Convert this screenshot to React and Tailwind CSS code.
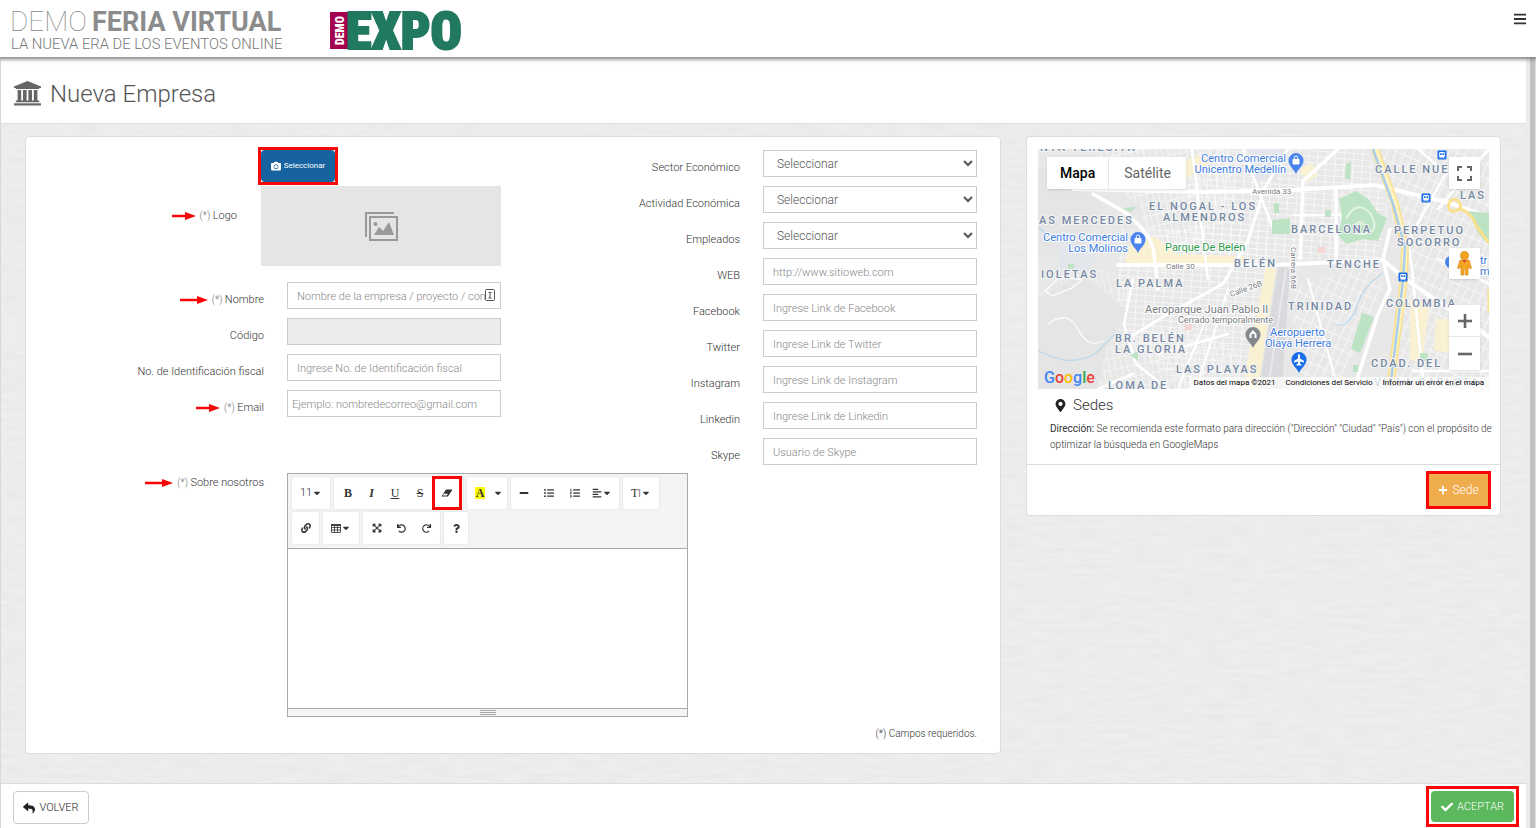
import React from "react";
import {
  FaCamera, FaBars, FaReply, FaCheck, FaPlus, FaMapMarkerAlt, FaListUl, FaListOl,
  FaAlignLeft, FaLink, FaUndo, FaRedo, FaQuestion, FaMinus, FaCaretDown, FaExpandArrowsAlt,
} from "react-icons/fa";

function Arrow({ wide }) {
  return (
    <svg width={wide ? 28 : 24} height="10" viewBox={wide ? "-4 0 28 10" : "0 0 24 10"} className="shrink-0" aria-hidden="true">
      <path d={wide ? "M-4 3.800H13V1L24 5L13 9V6.200H-4Z" : "M0 3.800H13V1L24 5L13 9V6.200H0Z"} fill="#f90606" />
    </svg>
  );
}

function Label({ id, children, required, arrow, wide }) {
  return (
    <label htmlFor={id} className="flex items-center justify-end gap-1 whitespace-nowrap pt-2 leading-5">
      {arrow && <Arrow wide={wide} />}
      <span>{required && <span className="text-[10px] text-[#777]">(*) </span>}{children}</span>
    </label>
  );
}

const field = "h-[27px] w-full min-w-0 border border-[#ccc] bg-white font-light text-[#555] outline-none placeholder:text-[#888]";

function Row({ children }) {
  return <div className="mb-[9px] grid h-[27px] grid-cols-[226fr_214fr] gap-x-[23px] pr-[13px]">{children}</div>;
}

function SelectRow({ id, label }) {
  return (
    <Row>
      <Label id={id}>{label}</Label>
      <select id={id} className={field + " pl-[9px] text-[12px]"}><option>Seleccionar</option></select>
    </Row>
  );
}

function TextRow({ id, label, placeholder }) {
  return (
    <Row>
      <Label id={id}>{label}</Label>
      <input id={id} placeholder={placeholder} className={field + " px-[9px] pt-[2px]"} />
    </Row>
  );
}

function Group({ children }) {
  return <div className="flex h-8 items-center rounded-xs bg-white px-[2px] shadow-[0_0_1px_1px_#eaeaea]">{children}</div>;
}

function Tool({ label, children, className = "w-6" }) {
  return (
    <button type="button" aria-label={label} className={"flex h-8 items-center justify-center text-[10px] text-[#333] " + className}>
      {children}
    </button>
  );
}

function EraserIcon() {
  return (
    <svg width="12" height="8" viewBox="0 0 12 8" aria-hidden="true">
      <path d="M5 .5H11.500L7 7.500H.5Z" fill="#333" /><path d="M2.900 4.700H6.900L5.800 6.500H1.800Z" fill="#fff" />
    </svg>
  );
}

function TableIcon() {
  return (
    <svg width="10" height="9" viewBox="0 0 10 9" fill="none" stroke="#444" aria-hidden="true">
      <path d="M0 1H10" strokeWidth="2" /><path d="M.5.5H9.500V8.500H.5ZM.5 3.500H9.500M.5 6H9.500M3.500 1V8.500M6.500 1V8.500" strokeWidth=".9" />
    </svg>
  );
}

function BankIcon() {
  return (
    <svg width="27" height="25" viewBox="0 0 27 25" fill="#666" aria-hidden="true">
      <path d="M13.500 0L27 5.500V7H25.200V8H1.800V7H0V5.500Z" />
      <path d="M3.600 9H7.200V19.500H9V9H12.600V19.500H14.400V9H18V19.500H19.800V9H23.400V19.500H25.200V21.300H1.800V19.500H3.600Z" />
      <path d="M0 22.300H27V24.500H0Z" />
    </svg>
  );
}

function Editor() {
  return (
    <div className="flex h-[244px] flex-col border border-[#a9a9a9] bg-white">
      <div className="flex flex-wrap content-start gap-x-1 gap-y-[3px] border-b border-[#a9a9a9] bg-[#f4f4f4] pt-[3px] pr-[5px] pb-[4px] pl-[4px]">
        <Group><Tool label="Tamaño" className="w-[34px] text-[11px]!">11<FaCaretDown size={10} /></Tool></Group>
        <Group>
          <Tool label="Negrita"><span className="font-['Liberation_Serif',serif] text-[12px] font-bold">B</span></Tool>
          <Tool label="Cursiva" className="w-[23px]"><span className="font-['Liberation_Serif',serif] text-[12px] font-bold italic">I</span></Tool>
          <Tool label="Subrayado"><span className="font-['Liberation_Serif',serif] text-[12px] underline">U</span></Tool>
          <Tool label="Tachado" className="w-[26px]"><span className="font-['Liberation_Serif',serif] text-[12px] line-through">S</span></Tool>
          <Tool label="Borrar formato" className="relative z-10 w-[28px] outline-[3px] -outline-offset-2 outline-[#f90606]"><EraserIcon /></Tool>
        </Group>
        <Group>
          <Tool label="Color" className="w-[22px]"><span className="bg-[#ff0] px-px font-['Liberation_Serif',serif] text-[12px] leading-3 font-bold">A</span></Tool>
          <Tool label="Más colores" className="w-[14px]"><FaCaretDown /></Tool>
        </Group>
        <Group>
          <Tool label="Línea" className="w-[22px]"><FaMinus /></Tool>
          <Tool label="Lista" className="w-[28px]"><FaListUl /></Tool>
          <Tool label="Lista numerada"><FaListOl /></Tool>
          <Tool label="Párrafo" className="w-[30px]"><FaAlignLeft /><FaCaretDown /></Tool>
        </Group>
        <Group><Tool label="Alto de línea" className="w-[32px]"><span className="font-['Liberation_Serif',serif] text-[12px]">T</span>I<FaCaretDown /></Tool></Group>
        <Group><Tool label="Enlace" className="w-[23px]"><FaLink /></Tool></Group>
        <Group><Tool label="Tabla" className="w-[32px]"><TableIcon /><FaCaretDown /></Tool></Group>
        <Group>
          <Tool label="Pantalla completa"><FaExpandArrowsAlt /></Tool>
          <Tool label="Deshacer" className="w-[25px]"><FaUndo size={9} /></Tool>
          <Tool label="Rehacer"><FaRedo size={9} /></Tool>
        </Group>
        <Group><Tool label="Ayuda" className="w-[20px]"><FaQuestion size={9} /></Tool></Group>
      </div>
      <textarea id="sobre" className="min-h-0 w-full flex-1 resize-none bg-white p-2 outline-none" />
      <div className="flex h-[8px] flex-col items-center justify-center gap-px border-t border-[#a9a9a9] bg-[#f5f5f5]">
        <i className="h-px w-4 bg-[#a9a9a9]" /><i className="h-px w-4 bg-[#a9a9a9]" /><i className="h-px w-4 bg-[#a9a9a9]" />
      </div>
    </div>
  );
}

const AREAS = [
  [2, 2, "NTA TERESITA"], [111, 61, "EL NOGAL - LOS"], [125, 72, "ALMENDROS"], [1, 75, "AS MERCEDES"], [196, 118, "BELÉN"],
  [3, 129, "IOLETAS"], [78, 138, "LA PALMA"], [77, 193, "BR. BELÉN"], [77, 204, "LA GLORIA"], [138, 224, "LAS PLAYAS"],
  [70, 240, "LOMA DE"], [337, 24, "CALLE NUEVA"], [422, 50, "LAS"], [253, 84, "BARCELONA"], [356, 85, "PERPETUO"],
  [359, 97, "SOCORRO"], [289, 119, "TENCHE"], [250, 161, "TRINIDAD"], [348, 158, "COLOMBIA"], [333, 218, "CDAD. DEL"],
  [336, 237, "VILLA CARLOTA"],
];

function Pin({ x, y, color, children }) {
  return (
    <g transform={`translate(${x} ${y})`}>
      <path d="M0 0C-2-5-7.500-8-7.500-13.500A7.500 7.500 0 0 1 7.500-13.500C7.500-8 2-5 0 0Z" fill={color} />
      {children}
    </g>
  );
}

function Bag() {
  return <><rect x="-3.500" y="-15" width="7" height="5.500" rx="1" fill="#fff" /><path d="M-1.700-15v-1.200a1.700 1.700 0 0 1 3.400 0v1.200" fill="none" stroke="#fff" /></>;
}

function MapDrawing() {
  return (
    <svg viewBox="0 0 451 240" preserveAspectRatio="xMidYMid slice" className="block h-full w-full bg-[#e8e8e8] font-['Roboto',sans-serif]" role="img" aria-label="Mapa de Medellín">
      <defs>
        <pattern id="ga" width="9" height="6" patternUnits="userSpaceOnUse" patternTransform="rotate(4)"><path d="M0 0H9M0 0V6" stroke="#fafafa" strokeWidth="1.600" /></pattern>
        <pattern id="gb" width="8" height="12" patternUnits="userSpaceOnUse" patternTransform="rotate(24)"><path d="M0 0H8M0 0V12" stroke="#fafafa" strokeWidth="1.600" /></pattern>
        <pattern id="gc" width="6" height="11" patternUnits="userSpaceOnUse" patternTransform="rotate(-12)"><path d="M0 0H6M0 0V11" stroke="#fafafa" strokeWidth="1.500" /></pattern>
      </defs>
      <path d="M60 0H190L200 60L120 130L100 110L105 60L60 22Z" fill="url(#gc)" />
      <path d="M150 0H330L350 60L340 110H150Z" fill="url(#ga)" />
      <path d="M80 80H230V130L205 240H150L80 190Z" fill="url(#ga)" />
      <path d="M335 0H451V240H355L368 120Z" fill="url(#gb)" />
      <path d="M252 140L335 112L345 140L300 240H262Z" fill="url(#gb)" />
      <path d="M20 115L95 125L80 180L20 150Z" fill="url(#gc)" opacity=".6" />
      <path d="M60 200L140 175L200 200L190 240H60Z" fill="url(#gc)" opacity=".8" />
      <path d="M0 20L50 20L64 60L40 100L0 110ZM0 150L45 125L92 165L70 190L60 240H0Z" fill="#e4e5e4" />
      <path d="M20 82l20 15 18 8-8 20-28-5ZM210 0h38l-10 30h-22Z" fill="#e3e6ea" />
      <path d="M92 95l25-8 20 18 70 2v9l-90 3-30-6ZM130 20l30-14 12 8-28 18ZM262 20l12-6 5 13-12 7ZM372 150l20 4-8 60-12-3ZM398 170h18v35l-20-4ZM228 118l10 2-18 120h-16Z" fill="#faf0d2" />
      <path d="M240 118l12 1-8 121h-23Z" fill="#d9dadd" />
      <path d="M248 120L230 240" stroke="#e9e9e9" strokeWidth="2" />
      <path d="M0 202q14 6 26 9q18 2 32-7l20-20M0 78q10 10 22 14M345 124q-22 14-28 40l-10 12h-10" fill="none" stroke="#b9d7ec" strokeWidth="1.200" />
      <g fill="none" stroke="#fff" strokeLinecap="round">
        <path d="M35 40L165 43L255 41L337 36L412 54L451 68" strokeWidth="4" />
        <path d="M55 45L85 62Q114 84 116 105L120 140" strokeWidth="3.500" />
        <path d="M80 116H235L345 111L367 130L420 166L451 188" strokeWidth="4" />
        <path d="M92 188L130 165L185 135L210 92L226 40L250 0" strokeWidth="3" />
        <path d="M95 130L86 175L98 215L130 240M120 205L190 185M60 240L95 225M154 0L165 90L170 130M205 0L235 80" strokeWidth="2.500" />
        <path d="M352 80L345 110L352 140L340 165L316 240M300 0L265 32L262 110M298 40V110" strokeWidth="3.500" />
        <path d="M380 0L408 24L370 92L374 120L386 240M451 0L400 60M400 110L451 135M375 222H451" strokeWidth="2.500" />
        <path d="M255 66H305M270 130L300 240M190 140L158 240M168 170L140 240" strokeWidth="2" />
        <path d="M7 142l15-14 22 3-10 8-20 8ZM10 175q20-15 30 5t25 12" strokeWidth="1.200" />
      </g>
      <path d="M301 50L318 42L330 50L340 64L349 69L340 92L325 90L308 95L300 86L304 68Z" fill="#bce3c3" />
      <path d="M234 71L252 69V85H234ZM236 54H241V64H236ZM287 61H293V68H287ZM84 59L98 58L93 63ZM324 164L336 168L322 204L313 200ZM430 62L451 64V96L440 84ZM308 15L313 13L312 31L307 29ZM30 115H36V120H30ZM92 206L100 202V212ZM382 204H390V212H382ZM315 216H320V223H315Z" fill="#bce3c3" />
      <path d="M308 70Q318 50 332 64Q342 80 330 84Q312 88 317 76Q322 70 326 76" fill="none" stroke="#e4f4e7" strokeWidth="2" />
      <g fill="none">
        <path d="M337 0L357 55L367 98L366 130L352 240" stroke="#f9e08c" strokeWidth="8" />
        <path d="M337 0L357 55L367 98L366 130L352 240" stroke="#fff3c4" strokeWidth="5" />
        <path d="M335 0L355 55L367 98L365 132L352 240" stroke="#a9cdec" strokeWidth="2.500" />
        <path d="M411 54q5-7 10-1t-4 9q-8 1-6-8M421 60q12 2 18 18l12 16M451 140v24" stroke="#f9e08c" strokeWidth="3" />
      </g>
      <rect x="147" y="175" width="7" height="6" fill="#f6d5d3" /><rect x="280" y="98" width="7" height="6" fill="#f6d5d3" />
      <g fontSize="11" fontWeight="500" letterSpacing="2" fill="#7488a3" stroke="#f5f5f5" strokeWidth="2" paintOrder="stroke">
        {AREAS.map(([x, y, t]) => <text key={t} x={x} y={y}>{t}</text>)}
      </g>
      <g fontSize="11" fontWeight="400" stroke="#fff" strokeWidth="2" paintOrder="stroke">
        <text x="127" y="102" fill="#2f9a4f">Parque De Belén</text>
        <g fill="#3c7be0">
          <text x="90" y="92" textAnchor="end">Centro Comercial</text><text x="90" y="103" textAnchor="end">Los Molinos</text>
          <text x="248" y="13" textAnchor="end">Centro Comercial</text><text x="248" y="24" textAnchor="end">Unicentro Medellín</text>
          <text x="232" y="187">Aeropuerto</text><text x="227" y="198">Olaya Herrera</text>
          <text x="442" y="115">tr</text><text x="442" y="126">m</text>
        </g>
        <g fill="#777b80">
          <text x="107" y="164">Aeroparque Juan Pablo II</text>
          <text x="140" y="174" fontSize="9">Cerrado temporalmente</text>
          <g fontSize="8">
            <text x="214" y="45">Avenida 33</text><text x="128" y="120">Calle 30</text>
            <text transform="translate(193 148) rotate(-20)">Calle 26B</text><text transform="translate(253 98) rotate(90)">Carrera 66B</text>
          </g>
        </g>
      </g>
      <Pin x={100} y={104} color="#4a84ee"><Bag /></Pin>
      <Pin x={258} y={25} color="#4a84ee"><Bag /></Pin>
      <Pin x={215} y={199} color="#84888c"><path d="M-3.500-10v-4l3.500-4l3.500 4v4h-2v-4h-3v4Z" fill="#fff" /></Pin>
      <Pin x={261} y={224} color="#1a6fe8"><path d="M-1-18.500h2v4l4 2.500v1.500l-4-1v2l1.500 1v1h-5v-1l1.500-1v-2l-4 1v-1.500l4-2.500Z" fill="#fff" /></Pin>
      <circle cx="413" cy="113" r="6" fill="#4a84ee" />
      {[[404, 6], [388, 49], [365, 128]].map(([x, y]) => (
        <g key={x} transform={`translate(${x} ${y})`}>
          <rect x="-4.500" y="-4.500" width="9" height="9" rx="1" fill="#1a6fe8" />
          <rect x="-2.800" y="-3" width="5.600" height="5.500" rx="1" fill="#fff" />
          <path d="M-2-1.800h1.600V0H-2ZM.4-1.800H2V0H.4Z" fill="#1a6fe8" /><path d="M-2 3.500l1-1M2 3.500l-1-1" stroke="#fff" />
        </g>
      ))}
    </svg>
  );
}

const control = "absolute right-[9px] flex w-[31px] items-center justify-center bg-white shadow-sm";

function MapPanel() {
  return (
    <div className="relative h-[240px] overflow-hidden">
      <MapDrawing />
      <div className="absolute top-2 left-[9px] flex h-8 bg-white text-[14px] shadow-sm">
        <button type="button" className="border-r border-[#e6e6e6] px-[13px] font-medium text-black">Mapa</button>
        <button type="button" className="px-[15px] font-normal text-[#666]">Satélite</button>
      </div>
      <button type="button" aria-label="Pantalla completa" className={control + " top-2 h-8"}>
        <svg width="15" height="15" viewBox="0 0 15 15" fill="none" stroke="#666" strokeWidth="2"><path d="M1 5V1H5M10 1H14V5M14 10V14H10M5 14H1V10" /></svg>
      </button>
      <button type="button" aria-label="Street View" className={control + " top-[99px] h-[31px]"}>
        <svg width="15" height="25" viewBox="0 0 15 25"><circle cx="7.500" cy="4.500" r="4" fill="#f5a623" stroke="#d78613" strokeWidth=".8" /><path d="M3 9h9l2.500 8-2 .6L11 14.500V24H8.200V18H6.800V24H4V14.500L2.500 17.600.5 17Z" fill="#f5a623" stroke="#d78613" strokeWidth=".7" /><path d="M5 9l2.500 3L10 9Z" fill="#d9472b" /></svg>
      </button>
      <div className={control + " top-[156px] h-[65px] flex-col"}>
        <button type="button" aria-label="Acercar" className="flex h-8 w-full items-center justify-center border-b border-[#e6e6e6]"><svg width="14" height="14" viewBox="0 0 14 14" stroke="#666" strokeWidth="2.600"><path d="M0 7H14M7 0V14" /></svg></button>
        <button type="button" aria-label="Alejar" className="flex w-full flex-1 items-center justify-center"><svg width="14" height="4" viewBox="0 0 14 4" stroke="#666" strokeWidth="2.600"><path d="M0 2H14" /></svg></button>
      </div>
      <div className="absolute bottom-[1px] left-[6px] text-[16px] leading-5 font-medium">
        <span className="text-[#4285f4]">G</span><span className="text-[#ea4335]">o</span><span className="text-[#fbbc05]">o</span><span className="text-[#4285f4]">g</span><span className="text-[#34a853]">l</span><span className="text-[#ea4335]">e</span>
      </div>
      <div className="absolute right-0 bottom-0 flex h-3 items-center gap-[10px] bg-white/70 px-[5px] text-[8px] font-normal whitespace-nowrap text-black">
        <span>Datos del mapa ©2021</span><a href="#condiciones">Condiciones del Servicio</a><a href="#error">Informar un error en el mapa</a>
      </div>
    </div>
  );
}

function Texture() {
  return (
    <svg className="absolute inset-0 h-full w-full" aria-hidden="true">
      <filter id="grain" x="0" y="0" width="100%" height="100%">
        <feTurbulence type="fractalNoise" baseFrequency="0.04 0.2" numOctaves="3" seed="4" />
        <feColorMatrix values="0 0 0 0 .5  0 0 0 0 .5  0 0 0 0 .5  .2 0 0 0 -.06" />
      </filter>
      <rect width="100%" height="100%" filter="url(#grain)" />
    </svg>
  );
}

export default function App() {
  return (
    <div className="flex min-h-screen flex-col bg-[#eeeeee] font-['Roboto',sans-serif] text-[11px] font-light text-[#333]">
      <header className="relative z-10 flex h-[57px] items-start bg-white pr-[9px] pl-[11px] shadow-[0_1px_4px_1px_#777]">
        <svg width="284" height="44" viewBox="0 0 284 44" className="mt-[9px] overflow-visible" role="img" aria-label="Demo Feria Virtual">
          <text x="-1" y="22" fontSize="28" fontWeight="100" fill="#888">DEMO</text>
          <text x="81" y="22" fontSize="27" fontWeight="700" fill="#8c8c8c">FERIA VIRTUAL</text>
          <text x="0" y="40" fontSize="14.800" fontWeight="300" fill="#777">LA NUEVA ERA DE LOS EVENTOS ONLINE</text>
        </svg>
        <svg width="140" height="48" viewBox="0 0 140 48" className="mt-[7px] ml-[35px] overflow-visible" role="img" aria-label="Demo Expo">
          <rect x="0" y="5" width="18" height="37" fill="#a3004f" />
          <text transform="translate(14 38) rotate(-90)" fontSize="12" fontWeight="900" fill="#fff" className="font-['Roboto_Condensed','Liberation_Sans_Narrow',Roboto,sans-serif]">DEMO</text>
          <text x="16" y="42" fontSize="52" fontWeight="900" fill="#21795f" stroke="#21795f" strokeWidth="2" className="font-['Roboto_Condensed','Liberation_Sans_Narrow',Roboto,sans-serif]">EXPO</text>
        </svg>
        <button type="button" aria-label="Menú" className="mt-3 ml-auto text-[14px] text-[#333]"><FaBars /></button>
      </header>
      <div className="flex flex-1">
        <div className="flex flex-1 flex-col border-l border-[#d8d8d8]">
          <h1 className="flex h-[67px] items-center gap-[9px] border-b border-[#e0e0e0] bg-white pt-[7px] pl-[13px] text-[24px] font-light text-[#555]">
            <BankIcon />Nueva Empresa
          </h1>
          <main className="relative flex-1">
            <Texture />
            <div className="relative grid grid-cols-[976fr_475fr] items-start gap-[25px] pt-3 pr-[25px] pb-[29px] pl-6">
              <form className="rounded-sm border border-[#ddd] bg-white pt-[13px] pr-[10px] pb-3 pl-3">
                <div className="grid grid-cols-2">
                  <div>
                    <div className="mb-4 grid grid-cols-[199fr_240fr] gap-x-6 pr-[13px]">
                      <div className="pt-[48px]"><Label id="logo" required arrow>Logo</Label></div>
                      <div>
                        <div className="w-[74px] outline-[3px] outline-[#f90606]">
                          <button id="logo" type="button" className="flex h-8 w-full items-center justify-center gap-[3px] rounded-sm bg-[#1763a0] text-[8px] font-normal text-white"><FaCamera size={10} />Seleccionar</button>
                        </div>
                        <div className="mt-1 flex h-20 items-center justify-center bg-[#e5e5e5]">
                          <svg width="33" height="29" viewBox="0 0 33 29" fill="none" stroke="#999" strokeWidth="2"><path d="M1 25V1H29" /><rect x="5" y="5" width="27" height="23" /><circle cx="10.500" cy="12" r="2" fill="#999" stroke="none" /><path d="M9 23l5-8 4 4 6-9 5 13Z" fill="#999" stroke="none" /></svg>
                        </div>
                      </div>
                    </div>
                    <Row>
                      <Label id="nombre" required arrow wide>Nombre</Label>
                      <div className="relative">
                        <input id="nombre" placeholder="Nombre de la empresa / proyecto / compañía" className={field + " pt-[2px] pr-[15px] pl-[9px]"} />
                        <svg width="10" height="12" viewBox="0 0 10 12" className="absolute top-[7px] right-[6px]" fill="none" stroke="#555"><rect x=".5" y=".5" width="9" height="11" rx="1" fill="#fff" /><path d="M3.500 3.500H6.500M5 3V9M3.500 9H6.500" /></svg>
                      </div>
                    </Row>
                    <Row><Label id="codigo">Código</Label><input id="codigo" disabled className={field + " bg-[#ececec]!"} /></Row>
                    <TextRow id="fiscal" label="No. de Identificación fiscal" placeholder="Ingrese No. de Identificación fiscal" />
                    <Row><Label id="email" required arrow>Email</Label><input id="email" type="email" placeholder="Ejemplo: nombredecorreo@gmail.com" className={field + " px-1 pt-[2px]"} /></Row>
                  </div>
                  <div>
                    <SelectRow id="sector" label="Sector Económico" />
                    <SelectRow id="actividad" label="Actividad Económica" />
                    <SelectRow id="empleados" label="Empleados" />
                    <TextRow id="web" label="WEB" placeholder="http://www.sitioweb.com" />
                    <TextRow id="facebook" label="Facebook" placeholder="Ingrese Link de Facebook" />
                    <TextRow id="twitter" label="Twitter" placeholder="Ingrese Link de Twitter" />
                    <TextRow id="instagram" label="Instagram" placeholder="Ingrese Link de Instagram" />
                    <TextRow id="linkedin" label="Linkedin" placeholder="Ingrese Link de Linkedin" />
                    <TextRow id="skype" label="Skype" placeholder="Usuario de Skype" />
                  </div>
                </div>
                <div className="-mt-px grid grid-cols-[226fr_401fr_279fr] items-start gap-x-[23px]">
                  <div className="-mt-2"><Label id="sobre" required arrow wide>Sobre nosotros</Label></div>
                  <Editor />
                </div>
                <p className="mt-[9px] -mb-px pr-[13px] text-right text-[10px] leading-4">(*) Campos requeridos.</p>
              </form>
              <section className="rounded-sm border border-[#ddd] bg-white">
                <div className="px-[11px] pt-3">
                  <MapPanel />
                  <h2 className="flex items-center gap-[6px] pt-[6px] pl-4 text-[15px] leading-5 font-light"><FaMapMarkerAlt className="text-[13px] text-[#222]" />Sedes</h2>
                </div>
                <p className="pt-[6px] pr-1 pb-[11px] pl-[23px] text-[10px] leading-4"><span className="font-normal">Dirección:</span> Se recomienda este formato para dirección ("Dirección" "Ciudad" "País") con el propósito de optimizar la búsqueda en GoogleMaps</p>
                <div className="flex justify-end border-t border-[#ddd] py-[9px] pr-3">
                  <button type="button" className="flex h-8 w-[59px] items-center justify-center gap-1 bg-[#f0ad4e] text-[12px] text-white outline-[3px] outline-[#f90606]"><FaPlus size={10} />Sede</button>
                </div>
              </section>
            </div>
          </main>
          <footer className="flex items-start justify-between border-t border-[#ddd] bg-white pt-[7px] pr-3 pb-1 pl-3">
            <button type="button" className="flex h-[33px] w-[76px] items-center justify-center gap-1 rounded-sm border border-[#ccc] bg-white pt-px text-[#222]"><FaReply size={12} />VOLVER</button>
            <div className="w-[83px] outline-[3px] outline-offset-2 outline-[#f90606]">
              <button type="button" className="flex h-[31px] w-full items-center justify-center gap-1 rounded-sm bg-[#5cb85c] pt-px text-white"><FaCheck size={12} />ACEPTAR</button>
            </div>
          </footer>
        </div>
        <div className="w-[10px] shrink-0 border-r border-l-4 border-r-[#e0e0e0] border-l-[#ebebeb] bg-[#c2c2c2]" />
      </div>
    </div>
  );
}
